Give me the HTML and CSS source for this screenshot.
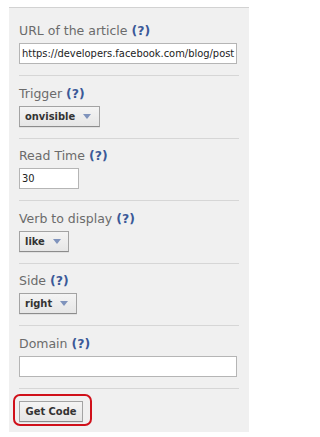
FILE: index.html
```html
<!DOCTYPE html>
<html>
<head>
<meta charset="utf-8">
<link rel="stylesheet" href="styles.css">
</head>
<body>
<div class="panel">
  <div class="field first">
    <div class="label">URL of the article <span class="help">(?)</span></div>
    <div class="input wide">https://developers.facebook.com/blog/post</div>
  </div>
  <div class="field">
    <div class="label">Trigger <span class="help">(?)</span></div>
    <div class="select sel-trigger"><span class="sel-text">onvisible</span><svg class="arrow" width="8" height="5" viewBox="0 0 8 5"><path d="M0 0H8L4 5Z" fill="#7f93bc"/></svg></div>
  </div>
  <div class="field">
    <div class="label">Read Time <span class="help">(?)</span></div>
    <div class="input short">30</div>
  </div>
  <div class="field">
    <div class="label">Verb to display <span class="help">(?)</span></div>
    <div class="select sel-verb"><span class="sel-text">like</span><svg class="arrow" width="8" height="5" viewBox="0 0 8 5"><path d="M0 0H8L4 5Z" fill="#7f93bc"/></svg></div>
  </div>
  <div class="field">
    <div class="label">Side <span class="help">(?)</span></div>
    <div class="select sel-side"><span class="sel-text">right</span><svg class="arrow" width="8" height="5" viewBox="0 0 8 5"><path d="M0 0H8L4 5Z" fill="#7f93bc"/></svg></div>
  </div>
  <div class="field">
    <div class="label">Domain <span class="help">(?)</span></div>
    <div class="input wide"></div>
  </div>
  <div class="actions">
    <div class="highlight"><div class="button">Get Code</div></div>
  </div>
</div>
</body>
</html>
```

FILE: styles.css
```css
html, body {
  margin: 0;
  padding: 0;
  background: #ffffff;
}
body {
  width: 258px;
  height: 437px;
  overflow: hidden;
}
.panel {
  margin: 7px 0 0 9px;
  width: 240px;
  box-sizing: border-box;
  background: #f0f0f0;
  border-top: 1px solid #d2d2d2;
  padding: 0 10px;
  font-family: "DejaVu Sans", sans-serif;
}
.field {
  padding: 9.5px 0 11px;
  border-bottom: 1px solid #d6d6d6;
  display: flex;
  flex-direction: column;
  align-items: flex-start;
  gap: 4px;
}
.field.first {
  padding-top: 15px;
}
.label {
  font-size: 12.5px;
  line-height: 16px;
  height: 16px;
  color: #6b6b6b;
  white-space: nowrap;
}
.help {
  color: #3b5998;
  font-weight: bold;
}
.input {
  box-sizing: border-box;
  height: 21px;
  background: #ffffff;
  border: 1px solid #b5b5b5;
  font-family: "DejaVu Sans Condensed", "DejaVu Sans", sans-serif;
  font-size: 11px;
  line-height: 19px;
  color: #222222;
  padding: 0 2px;
  white-space: nowrap;
  overflow: hidden;
}
.input.wide {
  width: 218px;
}
.input.short {
  width: 60px;
}
.select, .button {
  box-sizing: border-box;
  height: 21px;
  display: flex;
  align-items: center;
  background: linear-gradient(#f4f4f4, #e6e6e6);
  border: 1px solid #a3a3a3;
  border-bottom-color: #8c8c8c;
  box-shadow: 0 1px 0 rgba(0, 0, 0, 0.06);
  font-family: "DejaVu Sans Condensed", "DejaVu Sans", sans-serif;
  font-weight: bold;
  font-size: 11px;
  color: #333333;
}
.select {
  padding-left: 5px;
}
.sel-text {
  white-space: nowrap;
}
.arrow {
  display: block;
  margin-left: 8px;
}
.sel-trigger { width: 81px; }
.sel-verb { width: 50px; }
.sel-side { width: 58px; }
.actions {
  padding: 5.5px 0 6px;
}
.highlight {
  display: inline-block;
  margin-left: -6px;
  border: 2px solid #d0101a;
  border-radius: 7px;
  padding: 5px 7px 2px 4px;
}
.button {
  width: 64px;
  justify-content: center;
}
```
